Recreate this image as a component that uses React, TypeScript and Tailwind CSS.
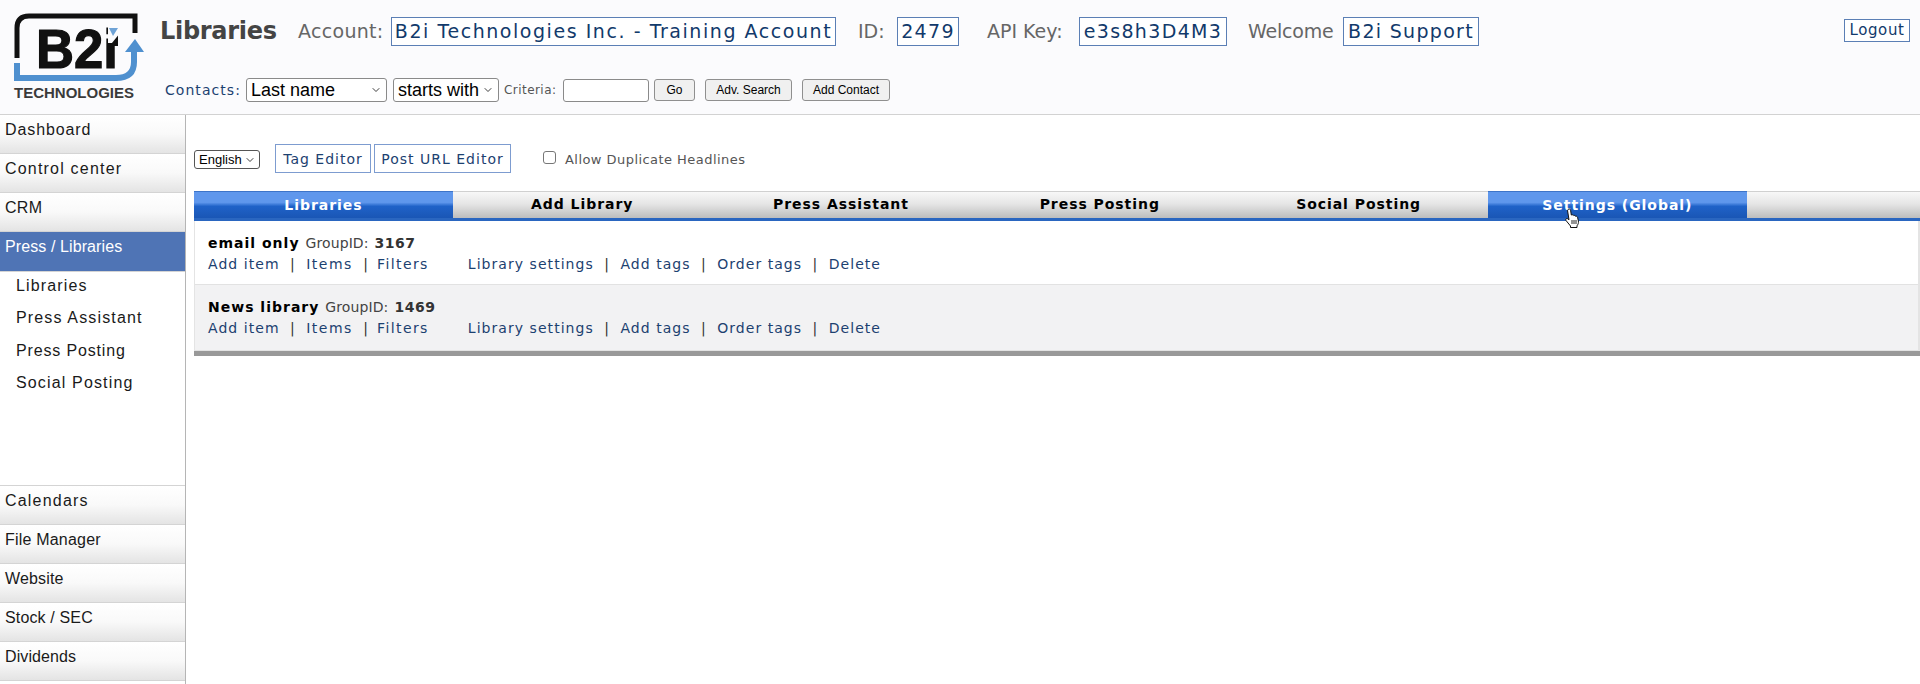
import { ChevronDown } from 'lucide-react'

const topMenu = [
  { label: 'Dashboard', track: 'tracking-[0.9px]' },
  { label: 'Control center', track: 'tracking-[1.2px]' },
  { label: 'CRM', track: 'tracking-[0.3px]' },
]
const subMenu = [
  { label: 'Libraries', track: 'tracking-[1.15px]' },
  { label: 'Press Assistant', track: 'tracking-[1.15px]' },
  { label: 'Press Posting', track: 'tracking-[0.85px]' },
  { label: 'Social Posting', track: 'tracking-[1.15px]' },
]
const bottomMenu = [
  { label: 'Calendars', track: 'tracking-[1.2px]' },
  { label: 'File Manager', track: 'tracking-[0.2px]' },
  { label: 'Website', track: 'tracking-[0.15px]' },
  { label: 'Stock / SEC', track: 'tracking-[0.15px]' },
  { label: 'Dividends', track: 'tracking-[0.1px]' },
]
const tabs = ['Libraries', 'Add Library', 'Press Assistant', 'Press Posting', 'Social Posting', 'Settings (Global)']
const libraries = [
  { name: 'email only', id: '3167', rowClass: 'bg-white h-[64px]' },
  { name: 'News library', id: '1469', rowClass: 'bg-[#f2f2f3] h-[66px]' },
]

function Logo() {
  return (
    <svg width="140" height="104" viewBox="0 0 140 104" className="shrink-0">
      <path d="M5 46 V16 Q5 4 17 4 H123 V21" fill="none" stroke="#111" strokeWidth="5" />
      <path d="M5 51 V66 H104 Q122 66 122 50 V38" fill="none" stroke="#4f90cf" strokeWidth="6" />
      <path d="M113 40 L123 27 L132 40 Z" fill="#4f90cf" />
      <text x="24" y="56" fontFamily="Liberation Sans, sans-serif" fontWeight="700" fontSize="56" textLength="82" lengthAdjust="spacingAndGlyphs" fill="#111" stroke="#111" strokeWidth="1.2">B2i</text>
      <path d="M96 13 H109 V31 H96 Z" fill="#fbfbfd" />
      <path d="M97 16 H106 L101 24 Z" fill="#6fa3d6" />
      <path d="M97.5 34 L106 23.5 V34 Z" fill="#111" />
      <text x="2" y="86" fontFamily="Liberation Sans, sans-serif" fontWeight="700" fontSize="14" textLength="120" lengthAdjust="spacingAndGlyphs" fill="#3a3a3a">TECHNOLOGIES</text>
    </svg>
  )
}

function FakeSelect({ label, className, textClass }: { label: string; className: string; textClass: string }) {
  return (
    <div className={`flex items-center justify-between bg-white border border-[#8a8a8a] rounded-[3px] pl-[4px] pr-[4px] text-black font-['Liberation_Sans',sans-serif] ${className}`}>
      <span className={textClass}>{label}</span>
      <ChevronDown className="w-[12px] h-[12px] text-[#222]" strokeWidth={1.75} />
    </div>
  )
}

function InfoBox({ children, className = '' }: { children: string; className?: string }) {
  return (
    <span className={`flex items-center justify-center h-[29px] border border-[#5b7fb5] bg-white text-[#123a6b] text-[19px] ${className}`}>
      {children}
    </span>
  )
}

function GrayButton({ children, className }: { children: string; className: string }) {
  return (
    <div className={`flex items-center justify-center h-[22px] bg-[#f0f0f0] border border-[#8f8f8f] rounded-[3px] text-[12px] text-black font-['Liberation_Sans',sans-serif] ${className}`}>
      {children}
    </div>
  )
}

function MenuItem({ label, track }: { label: string; track: string }) {
  return (
    <div className={`h-[39px] shrink-0 border-b border-[#d4d4d4] bg-linear-to-b from-white via-[#f9f9f9] to-[#e4e4e4] pl-[5px] pt-[5px] text-[16px] leading-[20px] text-[#1a1a1a] ${track}`}>
      {label}
    </div>
  )
}

function LinkSep() {
  return <span className="mx-[10.4px] text-[#333]">|</span>
}

function LibraryRow({ name, id, rowClass }: { name: string; id: string; rowClass: string }) {
  return (
    <div className={`${rowClass} border-b border-[#e2e2e2] pl-[13px] pt-[13px] font-['DejaVu_Sans',sans-serif]`}>
      <div className="h-[18px] flex items-center text-[14px] text-[#444]">
        <span className="font-bold text-black tracking-[1px] mr-[6px]">{name}</span>
        <span className="tracking-[0.1px]">GroupID:</span>
        <span className="font-bold ml-[6px] text-[#333] tracking-[0.5px]">{id}</span>
      </div>
      <div className="h-[20px] mt-[2px] flex items-center text-[14px] tracking-[1.05px] text-[#1c4170]">
        <span>Add item</span>
        <LinkSep />
        <span className="tracking-[1.5px]">Items</span>
        <LinkSep />
        <span className="-ml-[2.4px] tracking-[1.4px]">Filters</span>
        <span className="w-[39px]" />
        <span>Library settings</span>
        <LinkSep />
        <span>Add tags</span>
        <LinkSep />
        <span>Order tags</span>
        <LinkSep />
        <span>Delete</span>
      </div>
    </div>
  )
}

export default function App() {
  return (
    <div className="relative w-[1920px] h-[684px] overflow-hidden bg-white font-['Liberation_Sans',sans-serif]">
      <header className="h-[115px] flex bg-[#fbfbfd] border-b border-[#d2d2d2] pl-[12px]">
        <div className="pt-[12px]">
          <Logo />
        </div>
        <div className="flex-1 pl-[8px] font-['DejaVu_Sans',sans-serif]">
          <div className="flex items-center h-[29px] mt-[17px] text-[#666] text-[19px]">
            <span className="font-bold text-[24px] text-[#444] mr-[21px] w-[117px] tracking-[-0.3px] -mt-[1px]">Libraries</span>
            <span className="w-[93px] tracking-[0.3px]">Account:</span>
            <InfoBox className="w-[445px] tracking-[1.55px]">B2i Technologies Inc. - Training Account</InfoBox>
            <span className="ml-[22px] w-[39px]">ID:</span>
            <InfoBox className="w-[62px] tracking-[1.3px]">2479</InfoBox>
            <span className="ml-[28px] w-[92px]">API Key:</span>
            <InfoBox className="w-[148px] tracking-[1.35px]">e3s8h3D4M3</InfoBox>
            <span className="ml-[21px] w-[95px] tracking-[-0.2px]">Welcome</span>
            <InfoBox className="w-[136px] tracking-[1.3px]">B2i Support</InfoBox>
            <span className="ml-auto mr-[10px] w-[66px] h-[23px] -mt-[2px] flex items-center justify-center border border-[#5b7fb5] bg-white text-[15px] tracking-[0.6px] text-[#123a6b]">Logout</span>
          </div>
          <div className="flex items-center h-[26px] mt-[31px] ml-[5px]">
            <span className="w-[81px] text-[14px] tracking-[1.05px] text-[#1c4170]">Contacts:</span>
            <FakeSelect label="Last name" className="w-[141px] h-[24px]" textClass="text-[18px]" />
            <FakeSelect label="starts with" className="w-[106px] h-[24px] ml-[6px]" textClass="text-[18px]" />
            <span className="ml-[5px] w-[59px] text-[12px] text-[#555] tracking-[0.45px]">Criteria:</span>
            <div className="w-[86px] h-[23px] bg-white border border-[#8a8a8a] rounded-[3px]" />
            <GrayButton className="w-[41px] ml-[5px]">Go</GrayButton>
            <GrayButton className="w-[87px] ml-[10px]">Adv. Search</GrayButton>
            <GrayButton className="w-[88px] ml-[10px]">Add Contact</GrayButton>
          </div>
        </div>
      </header>

      <div className="flex h-[569px]">
        <aside className="w-[186px] shrink-0 border-r border-[#b5b5b5] flex flex-col">
          {topMenu.map((m) => (
            <MenuItem key={m.label} {...m} />
          ))}
          <div className="h-[40px] shrink-0 bg-[#4f74b5] border-b border-[#d4d4d4] pl-[5px] pt-[5px] text-[16px] leading-[20px] tracking-[0.1px] text-white">
            Press / Libraries
          </div>
          <div className="h-[213px] shrink-0 pt-[4px]">
            {subMenu.map((s) => (
              <div key={s.label} className={`h-[32.4px] pl-[16px] text-[16px] leading-[20px] text-[#1a1a1a] ${s.track}`}>
                {s.label}
              </div>
            ))}
          </div>
          <div className="border-t border-[#d4d4d4]">
            {bottomMenu.map((m) => (
              <MenuItem key={m.label} {...m} />
            ))}
          </div>
        </aside>

        <main className="flex-1 pl-[8px] font-['DejaVu_Sans',sans-serif]">
          <div className="h-[76px] flex items-start pt-[29px]">
            <FakeSelect label="English" className="w-[66px] h-[19px] mt-[6px] !rounded-[3px] !pl-[4px] !pr-[3px] !border-[#555]" textClass="text-[13px]" />
            <span className="ml-[15px] w-[96px] h-[29px] pt-[1px] flex items-center justify-center border border-[#7d9cd0] text-[14px] tracking-[1px] text-[#1c4170]">Tag Editor</span>
            <span className="ml-[3px] w-[137px] h-[29px] pt-[1px] flex items-center justify-center border border-[#7d9cd0] text-[14px] tracking-[1px] text-[#1c4170]">Post URL Editor</span>
            <div className="ml-[32px] mt-[7px] w-[13px] h-[13px] rounded-[3px] border border-[#777] bg-white" />
            <span className="ml-[9px] mt-[7px] text-[13px] leading-[17px] tracking-[0.45px] text-[#555]">Allow Duplicate Headlines</span>
          </div>
          <nav className="h-[30px] flex border-t border-[#d0d0d0] border-b-[3px] border-b-[#2a66c0] bg-[linear-gradient(#f7f7f7,#e6e6e6_45%,#bdbdbd)]">
            {tabs.map((t, i) => (
              <div
                key={t}
                className={`w-[258.8px] h-[27px] -mt-px flex items-center justify-center text-[14px] font-bold tracking-[0.95px] ${
                  i === 0 || i === 5
                    ? 'text-white bg-[linear-gradient(#5f97ec,#5f97ec_40%,#1f62c8_55%,#1a56b5)] border-t border-[#3d74c8]'
                    : 'text-black'
                }`}
              >
                {t}
              </div>
            ))}
          </nav>
          <div className="border-r-2 border-[#e4e4e4] border-l border-l-[#e4e4e4]">
            {libraries.map((l) => (
              <LibraryRow key={l.id} {...l} />
            ))}
          </div>
          <div className="h-[5px] bg-[#999]" />
        </main>
      </div>

      {/* mouse cursor */}
      <svg width="16" height="20" viewBox="0 0 16 20" className="absolute left-[1564px] top-[208px]">
        <path
          d="M4 1.5 C5 .6 6.4 1 6.6 2.2 L7.3 7 L8.2 6.8 C9 6.6 9.6 7 9.8 7.6 C10.6 7.2 11.4 7.5 11.6 8.3 C12.5 8 13.4 8.5 13.6 9.5 L14.4 13 C14.7 15 14 16.6 13 17.8 V19.5 H6.5 V18 L2 12.5 C1.2 11.4 2.4 10 3.6 10.7 L5 11.8 L3.6 3 C3.5 2.4 3.6 1.9 4 1.5 Z"
          fill="white"
          stroke="#111"
          strokeWidth="1"
        />
        <path d="M8 12 V16 M10 12 V16 M12 12 V16" stroke="#111" strokeWidth="0.9" />
      </svg>
    </div>
  )
}
